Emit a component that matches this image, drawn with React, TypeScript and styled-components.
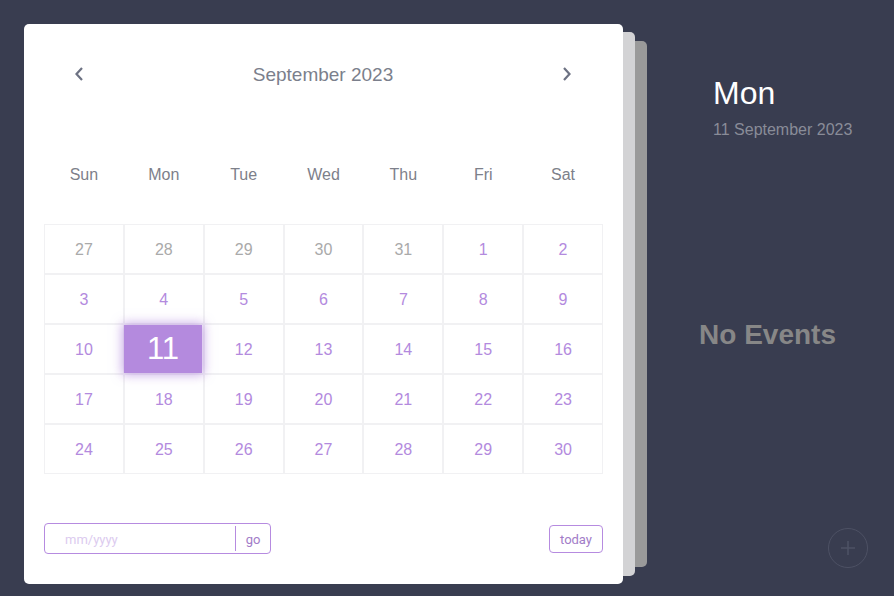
import React from "react";
import styled, { createGlobalStyle } from "styled-components";

const Global = createGlobalStyle`
  html, body { margin: 0; padding: 0; background: #393d50; }
  body { font-family: "Liberation Sans", Arial, sans-serif; }
  * { box-sizing: border-box; }
`;

const Page = styled.div`
  width: 894px;
  height: 596px;
  display: flex;
  padding: 24px 0 12px 24px;
  background: #393d50;
  overflow: hidden;
`;

const Stack = styled.div`
  display: flex;
  align-items: center;
  height: 560px;
`;

const Card = styled.div`
  width: 599px;
  height: 560px;
  background: #fff;
  border-radius: 5px;
  display: flex;
  flex-direction: column;
  padding: 0 20px;
`;

const Layer = styled.div<{ $h: number; $c: string }>`
  width: 12px;
  height: ${(p) => p.$h}px;
  background: ${(p) => p.$c};
  border-radius: 0 5px 5px 0;
`;

const Header = styled.div`
  height: 100px;
  display: flex;
  align-items: center;
  justify-content: space-between;
  padding: 0 31px 0 30px;
`;

const Arrow = styled.button`
  border: 0;
  background: none;
  padding: 0;
  width: 10px;
  height: 16px;
  display: flex;
  align-items: center;
  justify-content: center;
  cursor: pointer;
`;

const Title = styled.div`
  font-size: 19px;
  color: #7b7f8c;
  margin-left: 0;
  padding-top: 1px;
`;

const WeekRow = styled.div`
  display: grid;
  grid-template-columns: repeat(7, 1fr);
  height: 100px;
  align-items: center;
`;

const WeekDay = styled.div`
  text-align: center;
  font-size: 16px;
  color: #7d808a;
  padding-top: 2px;
`;

const Grid = styled.div`
  display: grid;
  grid-template-columns: repeat(7, 1fr);
  grid-auto-rows: 50px;
`;

const Cell = styled.div<{ $muted?: boolean }>`
  border: 1px solid #f1f1f3;
  display: flex;
  align-items: center;
  justify-content: center;
  font-size: 16px;
  padding-top: 2px;
  color: ${(p) => (p.$muted ? "#aaaaaa" : "#b38ade")};
  position: relative;
`;

const Selected = styled.div`
  position: absolute;
  left: -0.5px;
  right: 1px;
  top: -0.5px;
  bottom: 0;
  background: #b48ade;
  box-shadow: 0 0 10px 2px rgba(180, 138, 222, 0.7);
  color: #fff;
  font-size: 31px;
  display: flex;
  align-items: center;
  justify-content: center;
  z-index: 1;
`;

const Footer = styled.div`
  flex: 1;
  display: flex;
  align-items: center;
  justify-content: space-between;
  padding-top: 18px;
`;

const InputBox = styled.div`
  width: 227px;
  height: 31px;
  border: 1px solid #b68be0;
  border-radius: 4px;
  display: flex;
  align-items: center;
`;

const Input = styled.input`
  flex: 1;
  min-width: 0;
  height: 100%;
  border: 0;
  outline: none;
  background: transparent;
  padding: 3px 0 0 20px;
  font-family: Roboto, "Liberation Sans", sans-serif;
  font-size: 13px;
  color: #b38ade;
  &::placeholder { color: #dccbef; }
`;

const Go = styled.button`
  height: 25px;
  width: 35px;
  border: 0;
  border-left: 1px solid #b68be0;
  background: none;
  padding: 2px 0 0;
  font-family: Roboto, "Liberation Sans", sans-serif;
  font-size: 13px;
  color: #a27cc8;
  cursor: pointer;
`;

const TodayBtn = styled.button`
  height: 28px;
  width: 54px;
  border: 1px solid #b68be0;
  border-radius: 4px;
  background: #fff;
  font-family: Roboto, "Liberation Sans", sans-serif;
  font-size: 13px;
  color: #a27cc8;
  padding: 1px 0 0;
  margin-top: 1px;
  cursor: pointer;
`;

const Side = styled.div`
  flex: 1;
  display: flex;
  flex-direction: column;
  padding: 51px 26px 16px 66px;
`;

const DayName = styled.div`
  font-size: 32px;
  color: #ffffff;
  line-height: 37px;
`;

const DateLine = styled.div`
  font-size: 16px;
  color: #898c98;
  margin-top: 9px;
`;

const Empty = styled.div`
  flex: 1;
  display: flex;
  align-items: center;
  justify-content: center;
  margin-left: -46px;
  font-size: 28px;
  font-weight: bold;
  color: #878787;
  padding-top: 2px;
`;

const AddRow = styled.div`
  display: flex;
  justify-content: flex-end;
`;

const AddBtn = styled.button`
  width: 40px;
  height: 40px;
  border-radius: 50%;
  border: 1.5px solid #4d5164;
  background: none;
  padding: 0;
  display: flex;
  align-items: center;
  justify-content: center;
  cursor: pointer;
`;

const days = ["Sun", "Mon", "Tue", "Wed", "Thu", "Fri", "Sat"];
const cells: { d: number; muted?: boolean }[] = [
  { d: 27, muted: true },
  { d: 28, muted: true },
  { d: 29, muted: true },
  { d: 30, muted: true },
  { d: 31, muted: true },
  ...Array.from({ length: 30 }, (_, i) => ({ d: i + 1 })),
];

export default function App() {
  return (
    <Page>
      <Global />
      <Stack>
        <Card>
          <Header>
            <Arrow aria-label="previous">
              <svg width="10" height="16" viewBox="0 0 10 16">
                <polyline points="8,2 2.5,8 8,14" fill="none" stroke="#6d7283" strokeWidth="2.2" />
              </svg>
            </Arrow>
            <Title>September 2023</Title>
            <Arrow aria-label="next">
              <svg width="10" height="16" viewBox="0 0 10 16">
                <polyline points="2,2 7.5,8 2,14" fill="none" stroke="#6d7283" strokeWidth="2.2" />
              </svg>
            </Arrow>
          </Header>
          <WeekRow>
            {days.map((d) => (
              <WeekDay key={d}>{d}</WeekDay>
            ))}
          </WeekRow>
          <Grid>
            {cells.map((c, i) => (
              <Cell key={i} $muted={c.muted}>
                {c.d === 11 && !c.muted ? <Selected>11</Selected> : c.d}
              </Cell>
            ))}
          </Grid>
          <Footer>
            <InputBox>
              <Input placeholder="mm/yyyy" />
              <Go>go</Go>
            </InputBox>
            <TodayBtn>today</TodayBtn>
          </Footer>
        </Card>
        <Layer $h={544} $c="#d3d3d5" />
        <Layer $h={526} $c="#9a9a9a" />
      </Stack>
      <Side>
        <DayName>Mon</DayName>
        <DateLine>11 September 2023</DateLine>
        <Empty>No Events</Empty>
        <AddRow>
          <AddBtn aria-label="add">
            <svg width="18" height="18" viewBox="0 0 18 18">
              <path d="M9 2v14M2 9h14" stroke="#4d5164" strokeWidth="1.6" />
            </svg>
          </AddBtn>
        </AddRow>
      </Side>
    </Page>
  );
}
